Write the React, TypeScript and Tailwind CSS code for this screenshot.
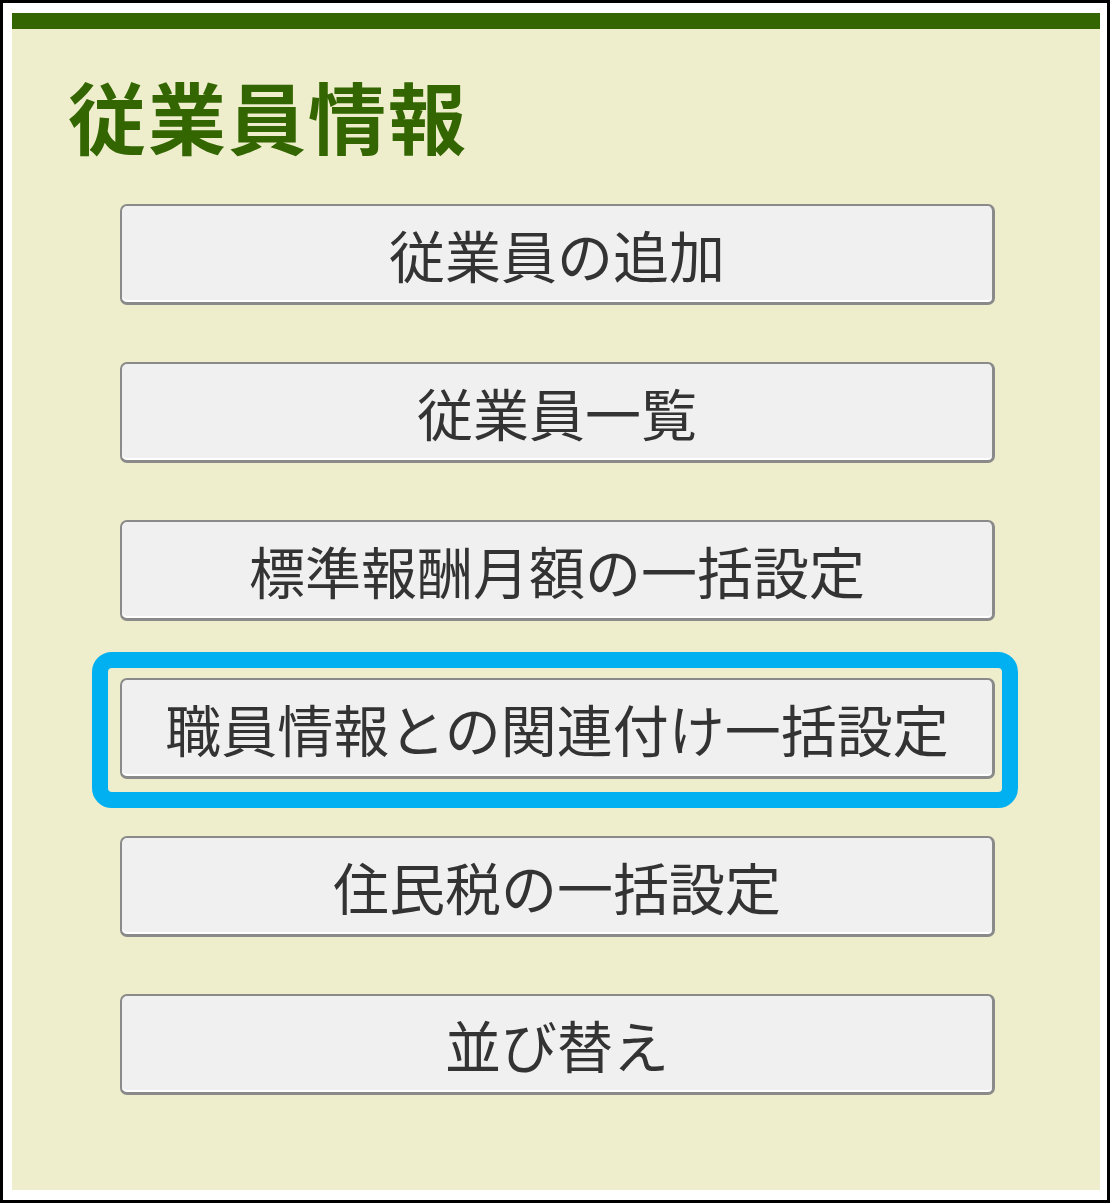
import React from 'react';

const items = [
  '従業員の追加',
  '従業員一覧',
  '標準報酬月額の一括設定',
  '職員情報との関連付け一括設定',
  '住民税の一括設定',
  '並び替え',
];

const App = () => {
  return (
    <div className="w-[1110px] h-[1203px] bg-white border-[3px] border-black pt-[10px] pl-[9px] pr-[7px] pb-[10px] font-['Noto_Sans_CJK_JP','Noto_Sans',sans-serif]">
      <div className="h-full bg-[#eeedcc] border-t-[16px] border-[#336600] flex flex-col">
        <h1 className="pl-[56px] pt-[36px] text-[78px] leading-[100px] font-bold text-[#336600] tracking-[2px]">
          従業員情報
        </h1>
        <div className="flex flex-col gap-[57px] pl-[108px] mt-[39px]">
          {items.map((label, index) => (
            <div key={index} className="relative w-[875px]">
              {index === 3 && (
                <div className="absolute -top-[26px] -left-[28px] -right-[23px] -bottom-[29px] border-[16px] border-[#00b0f0] rounded-[20px]" />
              )}
              <button className="relative w-full h-[101px] bg-[#f0f0f0] border-2 border-[#8a8a8a] border-b-[3px] border-r-[3px] rounded-[7px] shadow-[inset_0_-2px_0_#ffffff] text-[56px] text-[#333333] leading-none flex items-center justify-center">
                {label}
              </button>
            </div>
          ))}
        </div>
      </div>
    </div>
  );
};

export default App;
